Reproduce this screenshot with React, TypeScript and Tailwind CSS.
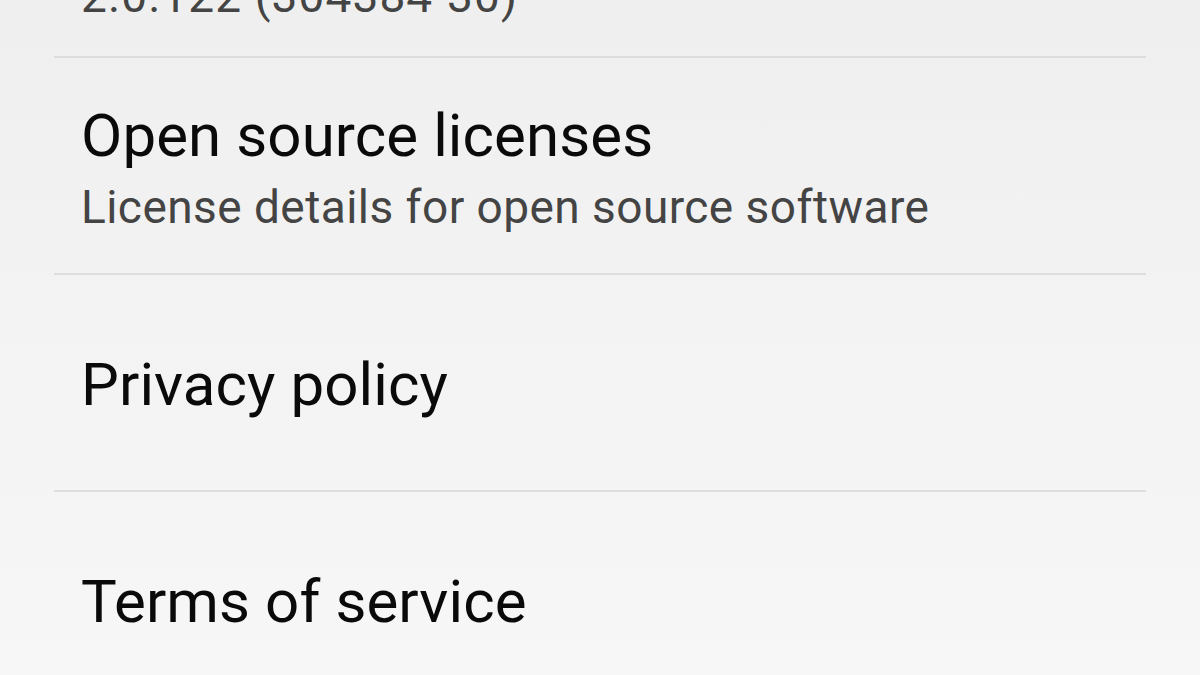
import React from "react";

const font = { fontFamily: "Roboto, 'Noto Sans', sans-serif" };

function Row({ title, subtitle }: { title: string; subtitle?: string }) {
  return (
    <div
      className={
        "h-[217px] shrink-0 border-b-2 border-[#dddddd] flex flex-col justify-center pl-[27px] " +
        (subtitle ? "" : "pt-[4px]")
      }
    >
      <div className="text-[60px] leading-[84px] text-[#0a0a0a] tracking-[0.1px]">{title}</div>
      {subtitle && (
        <div className="text-[46px] leading-[60px] text-[#444444] tracking-[0.45px] -mt-[1px]">{subtitle}</div>
      )}
    </div>
  );
}

export default function App() {
  return (
    <div
      className="w-[1200px] h-[675px] overflow-hidden bg-gradient-to-b from-[#efefef] to-[#f7f7f7]"
      style={font}
    >
      <div className="mx-[54px] flex flex-col">
        <div className="h-[58px] shrink-0 border-b-2 border-[#dddddd] flex flex-col justify-end overflow-hidden pl-[27px]">
          <div className="text-[46px] leading-[60px] text-[#444444] tracking-[1.1px] mb-[30px]">
            2.0.122 (304384-30)
          </div>
        </div>
        <Row title="Open source licenses" subtitle="License details for open source software" />
        <Row title="Privacy policy" />
        <Row title="Terms of service" />
      </div>
    </div>
  );
}
